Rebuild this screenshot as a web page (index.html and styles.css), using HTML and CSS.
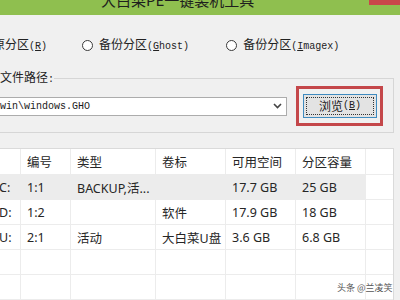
FILE: index.html
```html
<!DOCTYPE html>
<html lang="zh-CN">
<head>
<meta charset="utf-8">
<title>大白菜PE一键装机工具</title>
<link rel="stylesheet" href="styles.css">
</head>
<body>
<div class="window">
  <header class="titlebar">
    <span class="title">大白菜PE一键装机工具</span>
    <span class="close"></span>
  </header>

  <div class="radios">
    <label class="radio"><span class="dot"></span><span>还原分区<span class="mono">(<u>R</u>)</span></span></label>
    <label class="radio r2"><span class="dot"></span><span>备份分区<span class="mono">(<u>G</u>host)</span></span></label>
    <label class="radio r3"><span class="dot"></span><span>备份分区<span class="mono">(<u>I</u>magex)</span></span></label>
  </div>

  <fieldset class="group">
    <legend class="legend">文件路径<span class="mono">:</span></legend>
    <div class="pathrow">
      <div class="combo">
        <span class="mono path">win\windows.GHO</span>
        <svg class="chev" width="9" height="6" viewBox="0 0 9 6"><polyline points="1,1 4.5,4.5 8,1" fill="none" stroke="#444" stroke-width="1.6"/></svg>
      </div>
      <div class="highlight">
        <button class="btn"><span class="focus">浏览<span class="mono">(<u>B</u>)</span></span></button>
      </div>
    </div>
  </fieldset>

  <div class="list">
    <table class="grid">
      <thead>
        <tr>
          <th class="c0"></th><th class="c1">编号</th><th class="c2">类型</th><th class="c3">卷标</th><th class="c4">可用空间</th><th class="c5">分区容量</th><th class="cf"></th>
        </tr>
      </thead>
      <tbody>
        <tr class="sel"><td>C:</td><td>1:1</td><td>BACKUP,活...</td><td></td><td>17.7 GB</td><td>25 GB</td><td class="cf"></td></tr>
        <tr><td>D:</td><td>1:2</td><td></td><td>软件</td><td>17.9 GB</td><td>18 GB</td><td class="cf"></td></tr>
        <tr><td>U:</td><td>2:1</td><td>活动</td><td>大白菜U盘</td><td>3.6 GB</td><td>6.8 GB</td><td class="cf"></td></tr>
        <tr><td></td><td></td><td></td><td></td><td></td><td></td><td class="cf"></td></tr>
        <tr><td></td><td></td><td></td><td></td><td></td><td></td><td class="cf"></td></tr>
      </tbody>
    </table>
    <div class="watermark">头条 @兰凌笑</div>
  </div>
</div>
</body>
</html>
```

FILE: styles.css
```css
html, body {
  margin: 0;
  padding: 0;
}
body {
  width: 400px;
  height: 300px;
  overflow: hidden;
  background: #f0f0f0;
  font-family: "Noto Sans CJK SC", sans-serif;
  font-size: 12px;
  color: #222;
}
.window {
  width: 400px;
}
.mono {
  font-family: "Liberation Mono", monospace;
  font-size: 10px;
}
.titlebar {
  height: 15px;
  background: #8fbf4f;
  display: flex;
  align-items: flex-start;
  overflow: hidden;
}
.title {
  font-size: 15px;
  line-height: 15px;
  margin-top: -8px;
  padding-left: 101px;
  color: #1e1e1e;
}
.close {
  margin-left: auto;
  width: 31px;
  height: 5px;
  background: #c9474a;
}
.radios {
  display: flex;
  align-items: center;
  height: 16px;
  margin: 22px 0 0 -36px;
  line-height: 16px;
}
.radio {
  display: flex;
  align-items: center;
  gap: 6px;
}
.r2 { margin-left: 35px; }
.r3 { margin-left: 37px; }
.dot {
  width: 9px;
  height: 9px;
  border: 1px solid #3a3a3a;
  border-radius: 50%;
  background: #fff;
}
.group {
  margin: 18px 6px 0 -20px;
  padding: 0 9px 6px 19px;
  border: 1px solid #d6d6d6;
  min-width: 0;
}
.legend {
  padding: 0;
  font-size: 12px;
  line-height: 12px;
}
.pathrow {
  display: flex;
  align-items: center;
  gap: 9px;
}
.combo {
  flex: 1;
  margin-left: -10px;
  height: 17px;
  border: 1px solid #acacac;
  background: #fff;
  display: flex;
  align-items: center;
  justify-content: space-between;
  padding: 0 4px 0 9px;
}
.path {
  color: #1a1a1a;
}
.chev {
  display: block;
}
.highlight {
  width: 81px;
  height: 34px;
  border: 3px solid #c4474a;
  padding: 0;
  margin-right: 1px;
  display: flex;
  align-items: center;
  justify-content: center;
}
.btn {
  width: 74px;
  height: 24px;
  margin-left: 1px;
  border: 1px solid #3f8bc0;
  background: #e3e3e3;
  padding: 2px;
  font-family: "Noto Sans CJK SC", sans-serif;
  font-size: 12px;
  color: #1a1a1a;
  display: flex;
}
.focus {
  flex: 1;
  border: 1px dotted #333;
  display: flex;
  align-items: center;
  justify-content: center;
  line-height: 14px;
}
.list {
  position: relative;
  margin: 15px 0 0 -1px;
  width: 393px;
  height: 154px;
  overflow: hidden;
  border: 1px solid #dadada;
  border-bottom: 0;
  background: #fff;
}
.grid {
  border-collapse: separate;
  border-spacing: 0;
  table-layout: fixed;
  width: 393px;
  font-family: "Noto Sans", "Noto Sans CJK SC", sans-serif;
  font-size: 12.5px;
  color: #262626;
}
.grid th, .grid td {
  box-sizing: border-box;
  border-right: 1px solid #ececec;
  border-bottom: 1px solid #ececec;
  padding: 0 0 0 6px;
  text-align: left;
  font-weight: normal;
  white-space: nowrap;
  overflow: hidden;
}
.grid th {
  height: 26px;
}
.grid td {
  height: 25px;
}
.grid .c0 { width: 21px; }
.grid .c1 { width: 50px; }
.grid .c2 { width: 85px; }
.grid .c3 { width: 70px; }
.grid .c4 { width: 70px; }
.grid .c5 { width: 70px; }
.grid .cf { border-right: 0; }
.grid td:first-child {
  padding-left: 0;
  text-indent: -1px;
}
.sel td {
  background: #ececec;
}
.sel td.cf {
  background: #fff;
}
.watermark {
  position: absolute;
  left: 337px;
  top: 133px;
  font-size: 9px;
  line-height: 12px;
  color: #555;
  font-family: "Noto Sans CJK SC", sans-serif;
}
```
